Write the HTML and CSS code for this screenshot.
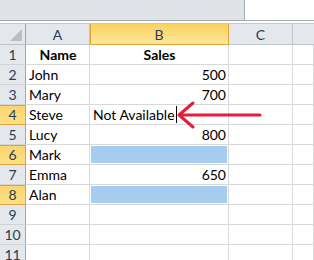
FILE: index.html
```html
<!DOCTYPE html>
<html>
<head>
<meta charset="utf-8">
<link rel="stylesheet" href="styles.css">
</head>
<body>
<div class="app">
  <div class="top">
    <div class="namebox"></div>
    <div class="rest"></div>
  </div>
  <div class="gap"></div>
  <div class="sheet">
    <div class="hd corner"><span class="tri"></span></div>
    <div class="hd col">A</div>
    <div class="hd col sel">B</div>
    <div class="hd col">C</div>
    <div class="hd col last"></div>

    <div class="hd rowh">1</div><div class="c bold center">Name</div><div class="c bold center">Sales</div><div class="c"></div><div class="c"></div>
    <div class="hd rowh">2</div><div class="c">John</div><div class="c num">500</div><div class="c"></div><div class="c"></div>
    <div class="hd rowh">3</div><div class="c">Mary</div><div class="c num">700</div><div class="c"></div><div class="c"></div>
    <div class="hd rowh sel">4</div><div class="c">Steve</div><div class="c edit">Not Available<span class="caret"></span></div><div class="c"></div><div class="c"></div>
    <div class="hd rowh">5</div><div class="c">Lucy</div><div class="c num">800</div><div class="c"></div><div class="c"></div>
    <div class="hd rowh sel">6</div><div class="c">Mark</div><div class="c fill"><span class="blue"></span></div><div class="c"></div><div class="c"></div>
    <div class="hd rowh">7</div><div class="c">Emma</div><div class="c num">650</div><div class="c"></div><div class="c"></div>
    <div class="hd rowh sel">8</div><div class="c">Alan</div><div class="c fill"><span class="blue"></span></div><div class="c"></div><div class="c"></div>
    <div class="hd rowh">9</div><div class="c"></div><div class="c"></div><div class="c"></div><div class="c"></div>
    <div class="hd rowh">10</div><div class="c"></div><div class="c"></div><div class="c"></div><div class="c"></div>
    <div class="hd rowh">11</div><div class="c"></div><div class="c"></div><div class="c"></div><div class="c"></div>
  </div>
  <svg class="arrow" width="96" height="32" viewBox="0 0 96 32">
    <path d="M9 15 L90 15 M23 3 L9 15 L23 27" fill="none" stroke="#e31d3a" stroke-width="3" stroke-linecap="round" stroke-linejoin="round"/>
  </svg>
</div>
</body>
</html>
```
FILE: styles.css
```css
html, body {
  margin: 0;
  padding: 0;
  background: #fff;
}
.app {
  position: relative;
  width: 314px;
  height: 260px;
  overflow: hidden;
  font-family: Lato, "Liberation Sans", sans-serif;
  font-size: 14px;
  color: #000;
}
.top {
  display: flex;
  height: 20px;
}
.namebox {
  width: 244px;
  background: #dfe3e8;
  border-right: 1px solid #a8adb4;
}
.rest {
  flex: 1;
  background: #fff;
}
.gap {
  height: 2px;
  border-top: 1px solid #a3a9b0;
  border-bottom: 1px solid #c4c8cd;
}
.sheet {
  display: grid;
  grid-template-columns: 26px 64px 139px 64px 21px;
  grid-template-rows: 21px repeat(11, 20px);
}
.hd {
  box-sizing: border-box;
  background: #e4e7eb;
  border-right: 1px solid #bfc4ca;
  border-bottom: 1px solid #bfc4ca;
  color: #2c3d52;
  display: flex;
  align-items: center;
  justify-content: center;
  font-family: Lato, "Liberation Sans", sans-serif;
  font-size: 14px;
}
.corner {
  position: relative;
  border-right-color: #9fa6ae;
}
.tri {
  position: absolute;
  right: 3px;
  bottom: 3px;
  width: 0;
  height: 0;
  border-left: 12px solid transparent;
  border-bottom: 12px solid #b9bec4;
}
.col.sel {
  background: linear-gradient(#f9d15f, #fee798);
  border-bottom: 1px solid #e0a23a;
  border-right: 1px solid #e0a23a;
  box-shadow: inset 1px 0 0 #e0a23a;
}
.col.last {
  border-right: none;
}
.rowh {
  border-right-color: #9fa6ae;
  border-bottom-color: #d0d4d9;
}
.rowh.sel {
  background: linear-gradient(#fbd56c, #fddf85);
  border-right-color: #e0a23a;
  border-bottom-color: #e0a23a;
  box-shadow: inset 0 1px 0 #e0a23a;
}
.c {
  box-sizing: border-box;
  border-right: 1px solid #d9d9d9;
  border-bottom: 1px solid #d9d9d9;
  display: flex;
  align-items: center;
  padding: 0 2px 0 3px;
  white-space: nowrap;
  overflow: visible;
}
.bold {
  font-weight: bold;
}
.center {
  justify-content: center;
}
.num {
  justify-content: flex-end;
}
.edit {
  padding-left: 3px;
}
.caret {
  display: inline-block;
  width: 1px;
  height: 17px;
  background: #000;
  margin-left: 1px;
}
.fill {
  padding: 1px;
  align-items: stretch;
}
.blue {
  flex: 1;
  background: #a6cdf0;
}
.arrow {
  position: absolute;
  left: 170px;
  top: 100px;
}
```
